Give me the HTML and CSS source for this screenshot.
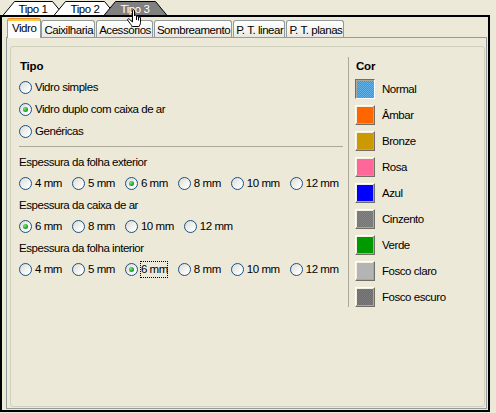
FILE: index.html
```html
<!DOCTYPE html>
<html lang="pt">
<head>
<meta charset="utf-8">
<title>Vidro</title>
<link rel="stylesheet" href="styles.css">
</head>
<body>
<div class="window">
  <svg class="sheets" width="496" height="15" viewBox="0 0 496 15">
    <polygon class="sheet" points="2.5,16 14.5,1.5 52.5,1.5 64.5,16"/>
    <text class="sheet-label" x="33" y="12.5" text-anchor="middle">Tipo 1</text>
    <polygon class="sheet" points="53.5,16 65.5,1.5 104.5,1.5 116.5,16"/>
    <text class="sheet-label" x="85" y="12.5" text-anchor="middle">Tipo 2</text>
    <polygon class="sheet sheet-active" points="103.5,16 115.5,1.5 155.5,1.5 167.5,16"/>
    <text class="sheet-label sheet-label-active" x="135" y="12.5" text-anchor="middle">Tipo 3</text>
  </svg>

  <div class="frame">
    <div class="notebook">
      <div class="tabs">
        <div class="tab tab-active">Vidro</div>
        <div class="tab">Caixilharia</div>
        <div class="tab">Acessórios</div>
        <div class="tab">Sombreamento</div>
        <div class="tab">P. T. linear</div>
        <div class="tab">P. T. planas</div>
      </div>
      <div class="panel">
        <div class="group">
          <div class="col-left">
            <div class="title">Tipo</div>
            <div class="stack">
              <div class="radio"><span class="rb"></span><span>Vidro simples</span></div>
              <div class="radio"><span class="rb on"></span><span>Vidro duplo com caixa de ar</span></div>
              <div class="radio"><span class="rb"></span><span>Genéricas</span></div>
            </div>
            <div class="sep"></div>
            <div class="line">Espessura da folha exterior</div>
            <div class="opts">
              <div class="radio"><span class="rb"></span><span>4 mm</span></div>
              <div class="radio"><span class="rb"></span><span>5 mm</span></div>
              <div class="radio"><span class="rb on"></span><span>6 mm</span></div>
              <div class="radio"><span class="rb"></span><span>8 mm</span></div>
              <div class="radio"><span class="rb"></span><span>10 mm</span></div>
              <div class="radio"><span class="rb"></span><span>12 mm</span></div>
            </div>
            <div class="line">Espessura da caixa de ar</div>
            <div class="opts">
              <div class="radio"><span class="rb on"></span><span>6 mm</span></div>
              <div class="radio"><span class="rb"></span><span>8 mm</span></div>
              <div class="radio"><span class="rb"></span><span>10 mm</span></div>
              <div class="radio"><span class="rb"></span><span>12 mm</span></div>
            </div>
            <div class="line">Espessura da folha interior</div>
            <div class="opts">
              <div class="radio"><span class="rb"></span><span>4 mm</span></div>
              <div class="radio"><span class="rb"></span><span>5 mm</span></div>
              <div class="radio"><span class="rb on"></span><span class="focus">6 mm</span></div>
              <div class="radio"><span class="rb"></span><span>8 mm</span></div>
              <div class="radio"><span class="rb"></span><span>10 mm</span></div>
              <div class="radio"><span class="rb"></span><span>12 mm</span></div>
            </div>
          </div>
          <div class="col-right">
            <div class="title title-cor">Cor</div>
            <div class="swatches">
              <div class="sw-row"><span class="sw sw-pressed c-normal"></span><span>Normal</span></div>
              <div class="sw-row"><span class="sw c-ambar"></span><span>Âmbar</span></div>
              <div class="sw-row"><span class="sw c-bronze"></span><span>Bronze</span></div>
              <div class="sw-row"><span class="sw c-rosa"></span><span>Rosa</span></div>
              <div class="sw-row"><span class="sw c-azul"></span><span>Azul</span></div>
              <div class="sw-row"><span class="sw c-cinzento"></span><span>Cinzento</span></div>
              <div class="sw-row"><span class="sw c-verde"></span><span>Verde</span></div>
              <div class="sw-row"><span class="sw c-claro"></span><span>Fosco claro</span></div>
              <div class="sw-row"><span class="sw c-escuro"></span><span>Fosco escuro</span></div>
            </div>
          </div>
        </div>
      </div>
    </div>
  </div>

  <svg class="cursor" width="17" height="19" viewBox="0 0 17 19">
    <path d="M5.5,1.8 C5.5,0.4 7.5,0.4 7.5,1.8 L7.5,7 C7.5,5.8 9.5,5.8 9.5,7 L9.5,8 C9.5,6.8 11.5,6.8 11.5,8 L11.5,9 C11.5,7.8 13.5,7.8 13.5,9 L13.5,13.5 C13.5,15.5 12.5,16.8 11.5,17.5 L5.5,17.5 C4.5,16.5 3.5,15 2,13 L0.8,11.3 C0.1,10.2 1.4,9.2 2.3,10.1 L5.5,13 Z" fill="#fff" stroke="#000" stroke-width="1"/>
    <path d="M9.5,8 L9.5,11 M11.5,9 L11.5,11.5" stroke="#000" stroke-width="1" fill="none"/>
  </svg>
</div>
</body>
</html>
```
FILE: styles.css
```css
* {
  box-sizing: border-box;
}

html,
body {
  margin: 0;
  padding: 0;
}

body {
  width: 496px;
  height: 413px;
  overflow: hidden;
  background: #ECE9D8;
  color: #000;
  font-family: "Liberation Sans", Arial, sans-serif;
  font-size: 11.5px;
  letter-spacing: -0.45px;
}

.window {
  position: relative;
  width: 496px;
  height: 413px;
}

/* sheet tabs at the very top */
.sheets {
  display: block;
}

.sheet {
  fill: #fff;
  stroke: #000;
  stroke-width: 1;
}

.sheet-active {
  fill: #808080;
}

.sheet-label {
  font-family: "Liberation Sans", Arial, sans-serif;
  font-size: 11.5px;
  letter-spacing: -0.45px;
  fill: #000;
}

.sheet-label-active {
  fill: #fff;
}

/* black frame */
.frame {
  width: 490px;
  height: 397px;
  border: 2px solid #000;
  padding: 1px 1px 1px 4px;
}

.notebook {
  display: flex;
  flex-direction: column;
  height: 100%;
}

.tabs {
  display: flex;
  align-items: flex-end;
  height: 19px;
  padding-left: 3px;
  position: relative;
  z-index: 1;
}

.tab {
  height: 17px;
  line-height: 14px;
  padding: 2px 1px 0 2px;
  margin-right: 1px;
  border: 1px solid #919B9C;
  border-bottom: none;
  border-radius: 3px 3px 0 0;
  background: linear-gradient(#FFFFFF, #F4F4F0 60%, #E7E6E0);
  white-space: nowrap;
}

.tab-active {
  height: 20px;
  margin: 0 0 -1px -2px;
  padding: 2px 4px 0 4px;
  border-top-color: #E68B2C;
  background: linear-gradient(#FFC73C 0, #FFC73C 2px, #FCFCFE 2px);
}

.panel {
  flex: 1;
  display: flex;
  border: 1px solid #919B9C;
  padding: 8px 1px 1px 3px;
}

.group {
  flex: 1;
  display: flex;
  align-items: flex-start;
  border: 1px solid #D0D0BF;
  border-radius: 3px;
  padding: 9px 0 0 8px;
}

.col-left {
  width: 324px;
}

.col-right {
  margin-left: 5px;
  margin-top: 1px;
  border-left: 1px solid #ACA899;
  padding-left: 6px;
}

.title {
  font-weight: bold;
  height: 20px;
  line-height: 20px;
  padding-left: 1px;
  letter-spacing: -0.2px;
}

.title-cor {
  height: 18px;
  line-height: 18px;
}

.radio {
  display: flex;
  align-items: center;
  white-space: nowrap;
}

.stack .radio {
  height: 22px;
}

.rb {
  position: relative;
  flex: none;
  width: 13px;
  height: 13px;
  margin-right: 3px;
  border: 1px solid #1C5180;
  border-radius: 50%;
  background: linear-gradient(135deg, #DCDBD3, #FFFFFF 85%);
}

.rb.on::after {
  content: "";
  position: absolute;
  left: 3px;
  top: 3px;
  width: 5px;
  height: 5px;
  border-radius: 50%;
  background: radial-gradient(circle at 35% 35%, #7EE57E, #21A121 60%, #178517);
}

.sep {
  border-top: 1px solid #ACA899;
  margin: 4px 0;
}

.line {
  display: flex;
  align-items: center;
  height: 21.5px;
  white-space: nowrap;
}

.opts {
  display: flex;
  align-items: center;
  gap: 10px;
  height: 21.5px;
}

.focus {
  position: relative;
  display: inline-block;
  line-height: 15px;
}

.focus::after {
  content: "";
  position: absolute;
  left: -1px;
  right: 0;
  top: -1px;
  bottom: -1px;
  border: 1px dotted #000;
}

.swatches {
  display: flex;
  flex-direction: column;
  gap: 6px;
  margin-top: 4px;
}

.sw-row {
  display: flex;
  align-items: center;
  height: 20px;
  white-space: nowrap;
}

.sw {
  flex: none;
  width: 20px;
  height: 20px;
  margin-right: 7px;
  border: 1px solid;
  border-color: #FFFFFF #716F64 #716F64 #FFFFFF;
  box-shadow: inset -1px -1px #ACA899, inset 1px 1px #F1EFE2;
}

.sw-pressed {
  border-color: #716F64 #FFFFFF #FFFFFF #716F64;
  box-shadow: inset 1px 1px #ACA899;
}

.c-normal {
  background: conic-gradient(#3A98D8 25%, #62B2E8 0 50%, #3A98D8 0 75%, #62B2E8 0) 0 0 / 2px 2px;
}

.c-ambar {
  background: #FF6600;
}

.c-bronze {
  background: #CC9900;
}

.c-rosa {
  background: #FF6699;
}

.c-azul {
  background: #0000FF;
}

.c-cinzento {
  background: conic-gradient(#747474 25%, #848484 0 50%, #747474 0 75%, #848484 0) 0 0 / 2px 2px;
}

.c-verde {
  background: #009900;
}

.c-claro {
  background: #B4B4B4;
}

.c-escuro {
  background: conic-gradient(#6C6C6C 25%, #7C7C7C 0 50%, #6C6C6C 0 75%, #7C7C7C 0) 0 0 / 2px 2px;
}

.cursor {
  position: absolute;
  left: 127px;
  top: 9px;
  z-index: 5;
}
```
